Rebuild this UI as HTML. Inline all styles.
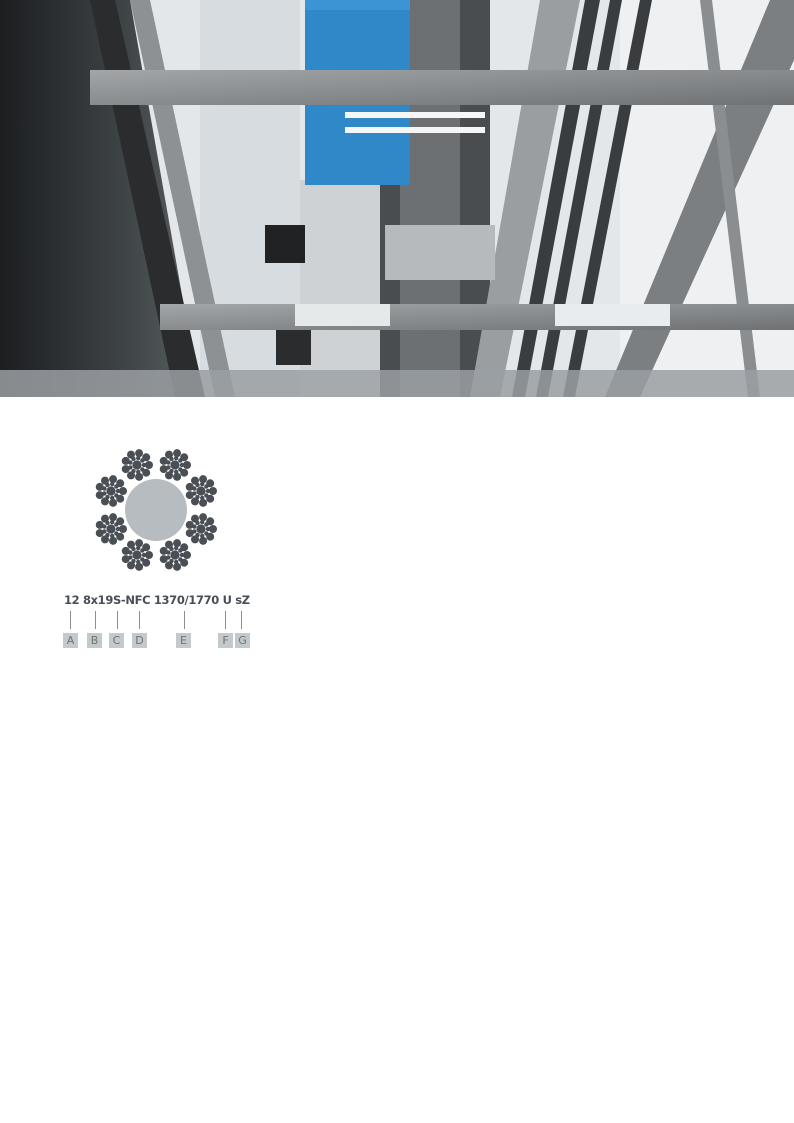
<!DOCTYPE html>
<html><head><meta charset="utf-8"><style>
html,body{margin:0;padding:0;background:#fff}
body{width:794px;height:1123px;position:relative;overflow:hidden;font-family:"Liberation Sans","DejaVu Sans",sans-serif}
.code{position:absolute;top:593px;left:64px;font-weight:bold;font-size:11.5px;color:#4a4f55;white-space:nowrap;font-family:"DejaVu Sans","Liberation Sans",sans-serif;letter-spacing:-0.35px}
.tick{position:absolute;top:611px;width:1px;height:18px;background:#8a8f94}
.lab{position:absolute;top:633px;width:15px;height:15px;background:#c4c9cc;color:#6d7277;font-size:11px;text-align:center;line-height:15px;font-family:"DejaVu Sans",sans-serif}
</style></head><body>
<svg width="794" height="397" style="position:absolute;left:0;top:0" viewBox="0 0 794 397">
<defs>
<linearGradient id="lg" x1="0" x2="1"><stop offset="0" stop-color="#1c1e20"/><stop offset="0.6" stop-color="#3d4245"/><stop offset="1" stop-color="#5a5f62"/></linearGradient>
<linearGradient id="beam" y1="0" y2="1"><stop offset="0" stop-color="#a3a6a8"/><stop offset="1" stop-color="#6e7275"/></linearGradient>
</defs>
<rect width="794" height="397" fill="#e4e7ea"/>
<rect x="200" y="0" width="100" height="397" fill="#d7dce0"/>
<rect x="300" y="180" width="80" height="190" fill="#cfd2d4"/>
<rect x="380" y="0" width="110" height="397" fill="#4a4d50"/>
<rect x="400" y="0" width="60" height="397" fill="#6c7073"/>
<rect x="620" y="0" width="174" height="397" fill="#eef0f1"/>
<rect x="305" y="0" width="105" height="185" fill="#2f88c8"/>
<rect x="305" y="0" width="105" height="10" fill="#3b94d4"/>
<polygon points="0,0 130,0 200,397 0,397" fill="url(#lg)"/>
<polygon points="90,0 115,0 205,397 175,397" fill="#2a2c2e"/>
<polygon points="130,0 150,0 235,397 215,397" fill="#8d9194"/>
<polygon points="540,0 580,0 500,397 470,397" fill="#9a9ea1"/>
<polygon points="585,0 600,0 525,397 512,397" fill="#3a3d40"/>
<polygon points="610,0 622,0 548,397 536,397" fill="#3a3d40"/>
<polygon points="640,0 652,0 575,397 563,397" fill="#3a3d40"/>
<polygon points="770,0 794,0 794,60 640,397 605,397" fill="#7b7f82"/>
<polygon points="700,0 712,0 760,397 748,397" fill="#8a8e91"/>
<rect x="90" y="70" width="704" height="35" fill="url(#beam)"/>
<rect x="160" y="304" width="634" height="26" fill="url(#beam)"/>
<rect x="295" y="304" width="95" height="22" fill="#e6e9ea"/>
<rect x="555" y="304" width="115" height="22" fill="#e9ecee"/>
<rect x="265" y="225" width="40" height="38" fill="#202224"/>
<rect x="276" y="330" width="35" height="35" fill="#2a2c2e"/>
<rect x="385" y="225" width="110" height="55" fill="#b6babd"/>
<rect x="345" y="112" width="140" height="6" fill="#f4f6f8"/>
<rect x="345" y="127" width="140" height="6" fill="#f4f6f8"/>
<rect x="0" y="370" width="794" height="27" fill="#9a9fa3" opacity="0.85"/>
</svg>
<svg width="794" height="200" style="position:absolute;left:0;top:430px" viewBox="0 430 794 200">
<defs>
<g id="s" fill="#4a4f55">
<circle r="4.6"/>
<circle cx="7" cy="0" r="2.2"/><circle cx="5.36" cy="4.5" r="2.2"/><circle cx="1.22" cy="6.89" r="2.2"/><circle cx="-3.5" cy="6.06" r="2.2"/><circle cx="-6.58" cy="2.39" r="2.2"/><circle cx="-6.58" cy="-2.39" r="2.2"/><circle cx="-3.5" cy="-6.06" r="2.2"/><circle cx="1.22" cy="-6.89" r="2.2"/><circle cx="5.36" cy="-4.5" r="2.2"/>
<circle cx="12" cy="0" r="4"/><circle cx="9.19" cy="7.71" r="4"/><circle cx="2.08" cy="11.82" r="4"/><circle cx="-6" cy="10.39" r="4"/><circle cx="-11.28" cy="4.1" r="4"/><circle cx="-11.28" cy="-4.1" r="4"/><circle cx="-6" cy="-10.39" r="4"/><circle cx="2.08" cy="-11.82" r="4"/><circle cx="9.19" cy="-7.71" r="4"/>
</g>
</defs>
<circle cx="156" cy="510" r="31" fill="#b7bcc0"/>
<use href="#s" x="137" y="465"/>
<use href="#s" x="175" y="465"/>
<use href="#s" x="201" y="491"/>
<use href="#s" x="201" y="529"/>
<use href="#s" x="175" y="555"/>
<use href="#s" x="137" y="555"/>
<use href="#s" x="111" y="529"/>
<use href="#s" x="111" y="491"/>
</svg>
<div class="code">12 8x19S-NFC 1370/1770 U sZ</div>
<div class="tick" style="left:70px"></div>
<div class="tick" style="left:95px"></div>
<div class="tick" style="left:117px"></div>
<div class="tick" style="left:139px"></div>
<div class="tick" style="left:184px"></div>
<div class="tick" style="left:225px"></div>
<div class="tick" style="left:241px"></div>
<div class="lab" style="left:63px">A</div>
<div class="lab" style="left:87px">B</div>
<div class="lab" style="left:109px">C</div>
<div class="lab" style="left:132px">D</div>
<div class="lab" style="left:176px">E</div>
<div class="lab" style="left:218px">F</div>
<div class="lab" style="left:235px">G</div>
</body></html>
